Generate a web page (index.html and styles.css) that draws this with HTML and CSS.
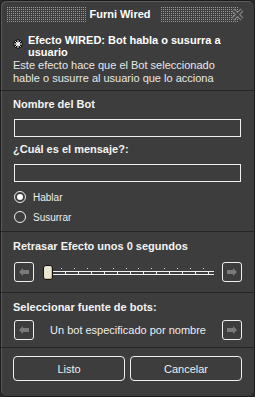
FILE: index.html
```html
<!DOCTYPE html>
<html lang="es">
<head>
  <meta charset="UTF-8" />
  <title>Furni Wired</title>
  <link rel="stylesheet" href="styles.css">
</head>
<body>

  <div class="window">
    <!-- === BARRE DE TITRE === -->
    <div class="titlebar">
      <span class="dots dots-left"></span>
      <span class="title">Furni Wired</span>
      <span class="dots dots-right"></span>
      <svg class="close" width="13" height="13" viewBox="0 0 13 13">
        <path d="M2 2 L11 11 M11 2 L2 11" stroke="#8a8a8a" stroke-width="4" fill="none"/>
        <path d="M2 2 L11 11 M11 2 L2 11" stroke="#454545" stroke-width="2" fill="none"/>
      </svg>
    </div>

    <!-- === INTRO === -->
    <div class="section intro">
      <div class="heading">
        <svg class="icon" width="10" height="10" viewBox="0 0 10 10">
          <path d="M5 0.5 V9.5 M0.5 5 H9.5 M1.8 1.8 L8.2 8.2 M8.2 1.8 L1.8 8.2" stroke="#000" stroke-width="2.6"/>
          <path d="M5 1 V9 M1 5 H9 M2.2 2.2 L7.8 7.8 M7.8 2.2 L2.2 7.8" stroke="#fff" stroke-width="1"/>
          <circle cx="5" cy="5" r="1.8" fill="#fff"/>
        </svg>
        <span>Efecto WIRED: Bot habla o susurra a usuario</span>
      </div>
      <p>Este efecto hace que el Bot seleccionado hable o susurre al usuario que lo acciona</p>
    </div>

    <!-- === BOT ET MESSAGE === -->
    <div class="section">
      <div class="label">Nombre del Bot</div>
      <div class="field"></div>
      <div class="label label-gap">¿Cuál es el mensaje?:</div>
      <div class="field"></div>
      <div class="radio checked"><span class="circle"></span>Hablar</div>
      <div class="radio"><span class="circle"></span>Susurrar</div>
    </div>

    <!-- === DELAI === -->
    <div class="section delay">
      <div class="label">Retrasar Efecto unos 0 segundos</div>
      <div class="row">
        <span class="arrow-btn">
          <svg width="10" height="8" viewBox="0 0 10 8"><path d="M0 4 L4 0 V2 H10 V6 H4 V8 Z" fill="#7a7a7a"/></svg>
        </span>
        <div class="slider">
          <span class="thumb"></span>
          <span class="track"></span>
        </div>
        <span class="arrow-btn">
          <svg width="10" height="8" viewBox="0 0 10 8"><path d="M10 4 L6 0 V2 H0 V6 H6 V8 Z" fill="#7a7a7a"/></svg>
        </span>
      </div>
    </div>

    <!-- === SOURCE === -->
    <div class="section source">
      <div class="label">Seleccionar fuente de bots:</div>
      <div class="row">
        <span class="arrow-btn">
          <svg width="10" height="8" viewBox="0 0 10 8"><path d="M0 4 L4 0 V2 H10 V6 H4 V8 Z" fill="#7a7a7a"/></svg>
        </span>
        <span class="choice">Un bot especificado por nombre</span>
        <span class="arrow-btn">
          <svg width="10" height="8" viewBox="0 0 10 8"><path d="M10 4 L6 0 V2 H0 V6 H6 V8 Z" fill="#7a7a7a"/></svg>
        </span>
      </div>
    </div>

    <!-- === BOUTONS === -->
    <div class="section buttons">
      <button>Listo</button>
      <button>Cancelar</button>
    </div>
  </div>

</body>
</html>
```

FILE: styles.css
```css
* {
  margin: 0;
  padding: 0;
  box-sizing: border-box;
}

body {
  background: #2a2a2a;
  font-family: "Liberation Sans", Arial, sans-serif;
  font-size: 11px;
  color: #f2f2f2;
}

.window {
  width: 255px;
  height: 397px;
  background: #3d3d3d;
  border: 1px solid #1c1c1c;
  border-radius: 6px;
  box-shadow: inset 1px 1px 0 #5a5a5a;
  display: flex;
  flex-direction: column;
  overflow: hidden;
}

/* === BARRE DE TITRE === */
.titlebar {
  display: flex;
  align-items: center;
  height: 21px;
  padding: 5px 10px 0 6px;
}

.dots {
  height: 15px;
  background: repeating-linear-gradient(90deg, #9a9a9a 0 1px, transparent 1px 2px);
  -webkit-mask-image: repeating-linear-gradient(0deg, #000 0 1px, transparent 1px 2px);
  mask-image: repeating-linear-gradient(0deg, #000 0 1px, transparent 1px 2px);
}

.dots-left {
  flex: 1;
  margin-right: 4px;
}

.dots-right {
  flex: 1;
  margin-left: 10px;
  margin-right: -8px;
}

.title {
  font-weight: bold;
  font-size: 11px;
  color: #fff;
}

.close {
  position: relative;
  display: block;
}

/* === SECTIONS === */
.section {
  padding: 0 12px;
  border-top: 1px solid #262626;
}

.titlebar + .section {
  border-top: none;
}

.intro {
  padding-top: 12px;
  height: 68px;
}

.heading {
  display: flex;
  align-items: flex-start;
  font-weight: bold;
  font-size: 11px;
  line-height: 12px;
  color: #fff;
}

.heading .icon {
  flex: none;
  margin: 5px 5px 0 0;
}

.intro p {
  margin-top: 1px;
  line-height: 13px;
  color: #e8e8e8;
}

.label {
  font-weight: bold;
  line-height: 13px;
  color: #f4f4f4;
}

.section:nth-child(3) {
  padding-top: 7px;
  padding-bottom: 8px;
}

.field {
  height: 18px;
  margin: 8px 1px 0;
  border: 1px solid #f0f0f0;
}

.label-gap {
  margin-top: 6px;
}

.field + .radio {
  margin-top: 9px;
}

.radio {
  display: flex;
  align-items: center;
  height: 12px;
  margin-top: 8px;
  padding-left: 1px;
  font-size: 10px;
  color: #eee;
}

.radio .circle {
  width: 12px;
  height: 12px;
  border: 1px solid #f0f0f0;
  border-radius: 50%;
  margin-right: 7px;
  display: flex;
  align-items: center;
  justify-content: center;
}

.radio.checked .circle::after {
  content: "";
  width: 6px;
  height: 6px;
  border-radius: 50%;
  background: #fff;
}

/* === LIGNES AVEC FLECHES === */
.delay {
  padding-top: 8px;
  padding-bottom: 10px;
}

.source {
  padding-top: 8px;
  padding-bottom: 7px;
}

.row {
  display: flex;
  align-items: center;
  height: 20px;
  margin: 9px 0 0 1px;
}

.source .row {
  margin-top: 6px;
}

.arrow-btn {
  flex: none;
  width: 20px;
  height: 20px;
  border: 1px solid #f0f0f0;
  border-radius: 3px;
  display: flex;
  align-items: center;
  justify-content: center;
}

.slider {
  flex: 1;
  display: flex;
  align-items: center;
  margin: 0 8px 0 9px;
}

.thumb {
  flex: none;
  width: 10px;
  height: 15px;
  background: #ebe6cf;
  border: 1px solid #111;
  border-radius: 3px;
  box-shadow: inset -1px -1px 0 #c9c3a5;
}

.track {
  position: relative;
  flex: 1;
  height: 4px;
  margin-top: 1px;
  border-top: 1px solid #eee;
  border-bottom: 1px solid #eee;
  background: repeating-linear-gradient(90deg, transparent 0 12px, #eee 12px 13px);
}

.track::before {
  content: "";
  position: absolute;
  left: 8px;
  right: 0;
  top: -4px;
  height: 1px;
  background: repeating-linear-gradient(90deg, #ddd 0 1px, transparent 1px 12.9px);
}

.choice {
  flex: 1;
  text-align: center;
  color: #eee;
}

/* === BOUTONS === */
.buttons {
  display: flex;
  gap: 5px;
  padding-top: 8px;
  flex: 1;
}

.buttons button {
  flex: 1;
  height: 25px;
  background: transparent;
  border: 1px solid #f0f0f0;
  border-radius: 4px;
  font-family: "Liberation Sans", Arial, sans-serif;
  font-size: 11px;
  color: #eee;
}
```
